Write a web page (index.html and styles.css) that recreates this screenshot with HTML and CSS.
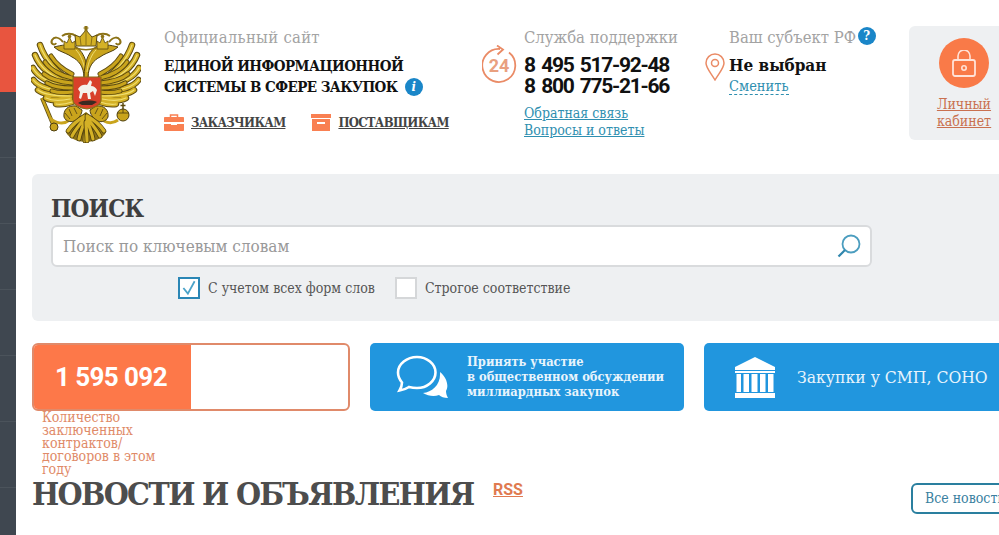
FILE: index.html
```html
<!DOCTYPE html>
<html lang="ru">
<head>
    <meta charset="UTF-8">
    <meta name="viewport" content="width=device-width, initial-scale=1.0">
    <title>Единая информационная система в сфере закупок</title>
    <link rel="stylesheet" href="styles.css">
</head>
<body>

    <aside class="sidebar">
        <div class="side-item side-top"></div>
        <div class="side-item side-active"></div>
        <div class="side-item"></div>
        <div class="side-item"></div>
        <div class="side-item"></div>
        <div class="side-item"></div>
        <div class="side-item"></div>
        <div class="side-item"></div>
    </aside>

    <main class="page">
        <header class="header">
            <svg class="arms" viewBox="31 26 110 117" aria-hidden="true">
                <defs>
                    <filter id="soft"><feGaussianBlur stdDeviation=".35"/></filter>
                    <path id="feathers" d="M70 80C58 74 45 60 40 45M70 84C54 78 40 68 35 55M70 88C52 84 38 78 33 68M70 92C52 90 39 88 33.500 80M70 96C55 96 44 95 38 90M70 99C60 101 52 101 46 98M72 102C66 104 61 105 56 104"/>
                    <path id="inner" d="M72 74C64 70 56 64 51 56M72 78C62 76 50 70 45 62M72 83C60 82 50 79 44 74M72 88C62 88 52 86 47 83M72 92C64 93 58 93 52 91"/>
                    <path id="tail" d="M85 116C78 120 72 125 68 131M85 118C80 124 75 130 72 136M85 120C83 126 80 133 79 139M86 122C86 128 85 135 85 141"/>
                    <g id="half">
                        <!-- wing -->
                        <use href="#feathers" fill="none" stroke="#5c4a10" stroke-width="6.500" stroke-linecap="round"/>
                        <use href="#feathers" fill="none" stroke="#d4b126" stroke-width="4.500" stroke-linecap="round"/>
                        <use href="#feathers" fill="none" stroke="#f0df72" stroke-width="1.200" stroke-linecap="round"/>
                        <use href="#inner" fill="none" stroke="#5c4a10" stroke-width="5" stroke-linecap="round"/>
                        <use href="#inner" fill="none" stroke="#c9a41f" stroke-width="3.200" stroke-linecap="round"/>
                        <!-- neck and head -->
                        <path d="M84 78C84 66 78 60 72 57C68 54 64 53 58 50L54 47C62 45 68 44 74 46C82 49 88 60 88 78Z" fill="#c9a41f" stroke="#4d3e0d" stroke-width="1"/>
                        <path d="M76 50C80 54 84 62 85 72" fill="none" stroke="#f0df72" stroke-width="1"/>
                        <!-- small crown and ribbon -->
                        <path d="M64 49L64 41L67 43L69.500 37L72 43L75 41L75 49Z" fill="#d4b126" stroke="#5c4a10" stroke-width=".8"/>
                        <circle cx="69.500" cy="36.500" r="1.800" fill="#8c7216"/>
                        <path d="M63 42C58 36 54 37 52 40C50 44 55 46 56 43M76 36C72 33 66 33 62 36" fill="none" stroke="#8c7216" stroke-width="2"/>
                        <!-- leg -->
                        <path d="M76 106C68 105 63 110 64 117C66 122 72 123 76 120C79 118 82 114 82 110Z" fill="#c9a41f" stroke="#4d3e0d" stroke-width="1"/>
                        <path d="M69 109L72 116M65 113L70 119M74 108L77 114" stroke="#4d3e0d" stroke-width=".8"/>
                        <!-- tail -->
                        <path d="M86 112C78 118 70 124 66 132C68 138 78 142 86 142Z" fill="#8c7216"/>
                        <use href="#tail" fill="none" stroke="#4d3e0d" stroke-width="4.800" stroke-linecap="round"/>
                        <use href="#tail" fill="none" stroke="#d4b126" stroke-width="3.200" stroke-linecap="round"/>
                    </g>
                </defs>
                <g filter="url(#soft)">
                    <!-- sceptre and orb -->
                    <path d="M42 98L55 129" stroke="#5c4a10" stroke-width="4"/>
                    <path d="M42 98L55 129" stroke="#c9a41f" stroke-width="2.400"/>
                    <path d="M50 118C56 124 64 124 68 121" fill="none" stroke="#c9a41f" stroke-width="3"/>
                    <circle cx="54" cy="127" r="4" fill="#c9a41f" stroke="#4d3e0d"/>
                    <path d="M104 121C110 124 114 123 118 120" fill="none" stroke="#c9a41f" stroke-width="3"/>
                    <path d="M123 109V103M120.500 105.500H125.500" stroke="#5c4a10" stroke-width="1.500"/>
                    <circle cx="123" cy="115" r="6" fill="#c9a41f" stroke="#4d3e0d"/>
                    <path d="M117 113H129M123 109V113" stroke="#4d3e0d" stroke-width=".8"/>
                    <use href="#half"/>
                    <use href="#half" transform="matrix(-1 0 0 1 172 0)"/>
                    <!-- big crown -->
                    <path d="M76 46L75 35L80 37L86 30L92 37L97 35L96 46Z" fill="#d4b126" stroke="#5c4a10"/>
                    <path d="M80 37L81 45M92 37L91 45M86 31V45" stroke="#8c7216"/>
                    <path d="M85 31V26H87V31M83.500 28H88.500" fill="#8c7216" stroke="#8c7216"/>
                    <path d="M76 48C82 50 90 50 96 48" fill="none" stroke="#8c7216" stroke-width="1.500"/>
                    <!-- shield with rider -->
                    <path d="M73 77H101V100C101 105 94 108 87 109C80 108 73 105 73 100Z" fill="#d8402c" stroke="#8c6f14" stroke-width="1.200"/>
                    <path d="M78 89C80 85 84 84 87 85L90 80L92 82L91 86C94 86 96 88 97 90L95 96L93 91L90 93L91 99L88 99L87 93L83 93L81 99L79 98L80 92Z" fill="#f4f1ea"/>
                    <path d="M78 103C83 100 92 100 97 102L92 105H82Z" fill="#3a2a20"/>
                </g>
            </svg>

            <div class="site-info">
                <div class="muted">Официальный сайт</div>
                <div class="site-name">
                    ЕДИНОЙ ИНФОРМАЦИОННОЙ<br>
                    СИСТЕМЫ В СФЕРЕ ЗАКУПОК
                    <span class="info-badge">i</span>
                </div>
                <div class="role-links">
                    <a class="role-link" href="#">
                        <svg class="role-icon" viewBox="0 0 20 17" aria-hidden="true">
                            <path d="M1 3H19C19.600 3 20 3.400 20 4V8H0V4C0 3.400 .400 3 1 3ZM0 10H7V11H13V10H20V16C20 16.600 19.600 17 19 17H1C.400 17 0 16.600 0 16Z" fill="#f98052"/>
                            <path d="M6.500 3V1H13.500V3" fill="none" stroke="#f98052" stroke-width="1.500"/>
                        </svg>
                        <span>ЗАКАЗЧИКАМ</span>
                    </a>
                    <a class="role-link" href="#">
                        <svg class="role-icon" viewBox="0 0 20 17" aria-hidden="true">
                            <path d="M0 0H20V4H0ZM1 5H19V17H1ZM6 8V10H14V8Z" fill="#f98052" fill-rule="evenodd"/>
                        </svg>
                        <span>ПОСТАВЩИКАМ</span>
                    </a>
                </div>
            </div>

            <div class="support">
                <svg class="support-icon" viewBox="0 0 36 40" aria-hidden="true">
                    <path d="M27 7.500A16.500 16.500 0 1 1 18 4" fill="none" stroke="#ea8b66" stroke-width="1.800"/>
                    <path d="M15 .5L21 4.500L15.500 9.500" fill="none" stroke="#ea8b66" stroke-width="1.800"/>
                    <text x="17" y="27" text-anchor="middle" class="support-num">24</text>
                </svg>
                <div>
                    <div class="muted">Служба поддержки</div>
                    <div class="phones">8 495 517-92-48<br>8 800 775-21-66</div>
                    <div class="support-links">
                        <a href="#">Обратная связь</a><br>
                        <a href="#">Вопросы и ответы</a>
                    </div>
                </div>
            </div>

            <div class="region">
                <svg class="pin" viewBox="0 0 20 28" aria-hidden="true">
                    <path d="M10 27C6 20 1 15 1 10A9 9 0 0 1 19 10C19 15 14 20 10 27Z" fill="none" stroke="#ea8b66" stroke-width="1.500"/>
                    <circle cx="10" cy="10" r="3.500" fill="none" stroke="#ea8b66" stroke-width="1.500"/>
                </svg>
                <div>
                    <div class="muted region-label">Ваш субъект РФ <span class="help-badge">?</span></div>
                    <div class="region-name">Не выбран</div>
                    <a class="region-change" href="#">Сменить</a>
                </div>
            </div>

            <a class="cabinet" href="#">
                <span class="cabinet-circle">
                    <svg class="lock" viewBox="0 0 24 27" aria-hidden="true">
                        <path d="M6 10V6A6 6 0 0 1 18 6V10" fill="none" stroke="#ffe3d8" stroke-width="1.600"/>
                        <rect x="1" y="10" width="22" height="16" rx="2" fill="none" stroke="#ffe3d8" stroke-width="1.800"/>
                        <circle cx="12" cy="18" r="2.200" fill="none" stroke="#ffe3d8" stroke-width="1.600"/>
                    </svg>
                </span>
                <span class="cabinet-text">Личный<br>кабинет</span>
            </a>
        </header>

        <section class="search">
            <h2 class="search-title">ПОИСК</h2>
            <div class="search-box">
                <span class="search-placeholder">Поиск по ключевым словам</span>
                <svg class="search-icon" viewBox="0 0 24 24" aria-hidden="true">
                    <circle cx="14" cy="10" r="8.500" fill="none" stroke="#4b9dbf" stroke-width="1.800"/>
                    <path d="M8 16L1.500 22.500" stroke="#2f86ad" stroke-width="2.200"/>
                </svg>
            </div>
            <div class="search-options">
                <label class="option">
                    <span class="checkbox checked">
                        <svg viewBox="0 0 16 16" aria-hidden="true"><path d="M3 8L7 13L13 2" fill="none" stroke="#4ba3c9" stroke-width="1.600"/></svg>
                    </span>
                    С учетом всех форм слов
                </label>
                <label class="option">
                    <span class="checkbox"></span>
                    Строгое соответствие
                </label>
            </div>
        </section>

        <section class="cards">
            <div class="stat">
                <div class="stat-value">1 595 092</div>
            </div>
            <a class="blue-card card-discuss" href="#">
                <svg class="chat-icon" viewBox="0 0 52 44" aria-hidden="true">
                    <path d="M44 17C51 23 53 31 50 36C50 39 51 41 52 43C48 43 45 42 43 40C38 42 32 41 27 38C36 37 45 30 44 17Z" fill="#fff"/>
                    <path d="M21 2C31 2 39.500 9 39.500 17.500C39.500 26 31 33 21 33C18 33 15 32.500 13 32C10 34 7 35 3.500 35.500C5 33 6 31 6 27.500C3.500 24.500 2 21 2 17.500C2 9 11 2 21 2Z" fill="none" stroke="#fff" stroke-width="2.600"/>
                </svg>
                <span class="discuss-text">Принять участие<br>в общественном обсуждении<br>миллиардных закупок</span>
            </a>
            <a class="blue-card card-smp" href="#">
                <svg class="bank-icon" viewBox="0 0 42 41" aria-hidden="true">
                    <path d="M21 0L41 10V13H1V10Z" fill="#fff"/>
                    <path d="M1 14H41V16H1ZM2.500 17H7V35H2.500ZM9.500 17H15V35H9.500ZM17.500 17H23.500V35H17.500ZM26 17H31.500V35H26ZM34 17H39.500V35H34ZM1 36H41V41H1Z" fill="#fff"/>
                </svg>
                <span class="smp-text">Закупки у СМП, СОНО</span>
            </a>
        </section>

        <div class="stat-caption">Количество<br>заключенных<br>контрактов/<br>договоров в этом<br>году</div>

        <section class="news-head">
            <h1 class="news-title">НОВОСТИ И ОБЪЯВЛЕНИЯ</h1>
            <a class="rss" href="#">RSS</a>
            <a class="all-news" href="#">Все новости</a>
        </section>
    </main>

</body>
</html>
```

FILE: styles.css
```css
html, body {
    height: 535px;
    overflow: hidden;
}

body {
    margin: 0;
    background: #fff;
    display: flex;
    font-family: "DejaVu Serif Condensed", "DejaVu Serif", serif;
    color: #333;
}

a {
    color: inherit;
}

/* Left rail */
.sidebar {
    width: 16px;
    flex-shrink: 0;
    background: #3f4750;
}

.side-item {
    height: 65px;
    border-bottom: 1px solid #4b535b;
}

.side-top {
    height: 27px;
    border-bottom: none;
}

.side-active {
    background: #e8553f;
    border-bottom: none;
}

.page {
    flex: 1;
    min-width: 0;
    overflow: hidden;
}

/* Header */
.header {
    display: flex;
    padding: 26px 0 0 15px;
    height: 174px;
    box-sizing: border-box;
}

.arms {
    width: 110px;
    height: 117px;
    flex-shrink: 0;
    margin-right: 23px;
}

.muted {
    color: #a3a3a3;
    font-size: 16.500px;
    line-height: 24px;
}

.site-info {
    width: 318px;
    flex-shrink: 0;
}

.site-info .muted {
    letter-spacing: .3px;
}

.site-name {
    margin-top: 6px;
    font-size: 15px;
    letter-spacing: -.55px;
    line-height: 21px;
    font-weight: bold;
    color: #111;
}

.info-badge,
.help-badge {
    display: inline-block;
    width: 18px;
    height: 18px;
    border-radius: 50%;
    background: #1a86c8;
    color: #fff;
    font-size: 13px;
    line-height: 18px;
    text-align: center;
    font-weight: bold;
    vertical-align: 1px;
    letter-spacing: 0;
}

.info-badge {
    font-style: italic;
    margin-left: 3px;
}

.help-badge {
    vertical-align: 3px;
    margin-left: -3px;
}

.role-links {
    display: flex;
    gap: 26px;
    margin-top: 16px;
}

.role-link {
    display: flex;
    align-items: center;
    gap: 7px;
    font-size: 13px;
    letter-spacing: -.7px;
    font-weight: bold;
    color: #444;
}

.role-icon {
    width: 20px;
    height: 17px;
}

.support {
    width: 222px;
    flex-shrink: 0;
    display: flex;
}

.support-icon {
    width: 36px;
    height: 40px;
    margin: 19px 6px 0 0;
    flex-shrink: 0;
}

.support-num {
    font-family: Roboto, sans-serif;
    font-weight: bold;
    font-size: 18px;
    fill: #e9a07f;
}

.phones {
    margin-top: 5px;
    font-family: Roboto, sans-serif;
    font-size: 21px;
    letter-spacing: -1.300px;
    word-spacing: 2.500px;
    line-height: 21px;
    font-weight: bold;
    color: #111;
}

.support-links {
    margin-top: 8px;
    font-size: 14px;
    line-height: 17px;
    color: #2f8fb0;
}

.region {
    width: 205px;
    flex-shrink: 0;
    display: flex;
}

.pin {
    width: 20px;
    height: 28px;
    margin: 27px 4px 0 1px;
    flex-shrink: 0;
}

.region-name {
    margin-top: 4px;
    font-size: 17px;
    line-height: 22px;
    font-weight: bold;
    color: #111;
}

.region-change {
    font-size: 14.500px;
    line-height: 16px;
    color: #2f8fb0;
    text-decoration: none;
    border-bottom: 1px dashed #2f8fb0;
    display: inline-block;
}

.cabinet {
    width: 110px;
    height: 114px;
    flex-shrink: 0;
    background: #eef0f2;
    border-radius: 6px;
    display: flex;
    flex-direction: column;
    align-items: center;
    padding-top: 12px;
    box-sizing: border-box;
}

.cabinet-circle {
    width: 50px;
    height: 50px;
    border-radius: 50%;
    background: #f97a48;
    display: flex;
    align-items: center;
    justify-content: center;
}

.lock {
    width: 24px;
    height: 27px;
}

.cabinet-text {
    margin-top: 8px;
    font-size: 14px;
    line-height: 17px;
    text-align: center;
    color: #c9704f;
    text-decoration: underline;
}

/* Search */
.search {
    margin-left: 16px;
    height: 147px;
    box-sizing: border-box;
    background: #eef0f2;
    border-radius: 6px 0 0 6px;
    padding: 19px 0 0 19px;
}

.search-title {
    margin: 0;
    font-size: 24px;
    letter-spacing: -.8px;
    line-height: 32px;
    font-weight: bold;
    color: #3f3f3f;
}

.search-box {
    width: 821px;
    height: 42px;
    box-sizing: border-box;
    background: #fff;
    border: 2px solid #d9dbdd;
    border-radius: 6px;
    display: flex;
    align-items: center;
    justify-content: space-between;
    padding: 0 9px 0 10px;
}

.search-placeholder {
    color: #999;
    font-size: 17px;
}

.search-icon {
    width: 24px;
    height: 24px;
}

.search-options {
    display: flex;
    gap: 20px;
    margin: 10px 0 0 127px;
}

.option {
    display: flex;
    align-items: center;
    gap: 8px;
    font-size: 14px;
    color: #555;
}

.checkbox {
    width: 22px;
    height: 22px;
    box-sizing: border-box;
    background: #fff;
    border: 2px solid #d5d7d9;
    display: block;
}

.checked {
    border-color: #2a86b5;
}

.checked svg {
    display: block;
    width: 18px;
    height: 18px;
}

/* Cards row */
.cards {
    display: flex;
    gap: 20px;
    margin: 22px 0 0 16px;
    height: 68px;
}

.stat {
    width: 318px;
    box-sizing: border-box;
    border: 2px solid #e08a6a;
    border-radius: 6px;
    overflow: hidden;
    flex-shrink: 0;
}

.stat-value {
    width: 157px;
    height: 100%;
    box-sizing: border-box;
    padding-right: 3px;
    background: #fd7849;
    color: #fff;
    font-family: Roboto, sans-serif;
    font-size: 26px;
    letter-spacing: -.6px;
    font-weight: bold;
    display: flex;
    align-items: center;
    justify-content: center;
}

.blue-card {
    background: #2196de;
    border-radius: 5px;
    color: #e8f4fc;
    text-decoration: none;
    display: flex;
    align-items: center;
}

.card-discuss {
    width: 314px;
    flex-shrink: 0;
    padding-left: 26px;
    box-sizing: border-box;
    gap: 19px;
}

.chat-icon {
    width: 52px;
    height: 44px;
    flex-shrink: 0;
}

.discuss-text {
    font-size: 12.800px;
    line-height: 15px;
    font-weight: bold;
    padding-bottom: 2px;
}

.card-smp {
    flex: 1;
    padding-left: 30px;
    gap: 21px;
    border-radius: 5px 0 0 5px;
}

.bank-icon {
    width: 42px;
    height: 41px;
    flex-shrink: 0;
}

.smp-text {
    font-size: 17.400px;
    white-space: nowrap;
}

.stat-caption {
    margin-left: 26px;
    font-size: 14px;
    line-height: 13px;
    color: #df8a68;
}

/* News */
.news-head {
    display: flex;
    align-items: flex-start;
    margin: -2px 0 0 16px;
    height: 40px;
}

.news-title {
    margin: 0;
    width: 461px;
    flex-shrink: 0;
    font-size: 32px;
    letter-spacing: -1.650px;
    line-height: 40px;
    font-weight: bold;
    white-space: nowrap;
    color: #4d4d4d;
}

.rss {
    margin-top: 6px;
    font-family: Roboto, sans-serif;
    font-size: 16px;
    line-height: 20px;
    font-weight: bold;
    color: #e07a50;
}

.all-news {
    margin: 9px 0 0 388px;
    height: 31px;
    box-sizing: border-box;
    width: 110px;
    flex-shrink: 0;
    border: 2px solid #2a7f9f;
    border-radius: 6px;
    padding-left: 12px;
    font-size: 14px;
    line-height: 27px;
    color: #3a7f9f;
    text-decoration: none;
    white-space: nowrap;
}
```
